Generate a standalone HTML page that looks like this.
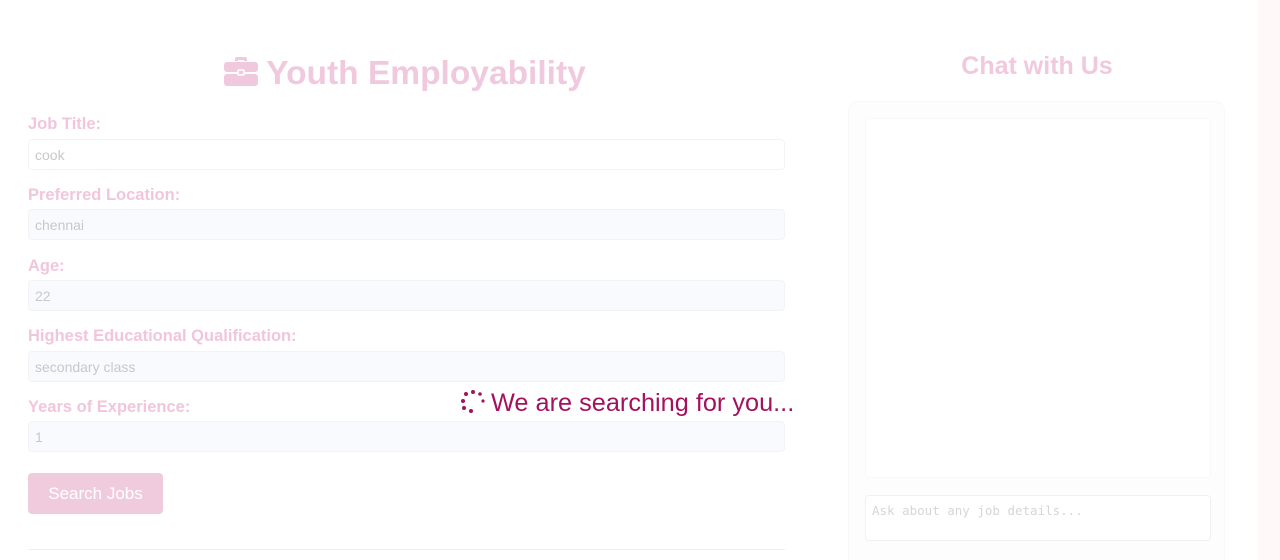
<!DOCTYPE html>
<html><head><style>
*{box-sizing:border-box;margin:0;padding:0}
html{overflow:hidden;height:560px}
body{width:1280px;height:560px;overflow:hidden;background:#fff;font-family:"Liberation Sans",sans-serif;position:relative}
.abs{position:absolute}
h1{position:absolute;left:0;width:810px;top:55px;text-align:center;font-size:33.5px;font-weight:bold;color:#f0c9de}
.lbl{position:absolute;left:28px;font-size:16.5px;font-weight:bold;color:#f1c6dd}
.inp{position:absolute;left:28px;width:757px;height:31px;border:1px solid #f3f3f5;border-radius:4px;background:#f9fafd;font-size:14px;color:#c8c8cc;padding:7px 6px}
.btn{position:absolute;left:28px;top:473px;width:135px;height:41px;background:#f0cbde;border-radius:4px;color:#fff;font-size:17px;text-align:center;line-height:41px}
</style></head><body>
<div class="abs" style="left:1258px;top:0;width:22px;height:560px;background:#fff8f8"></div>
<h1><svg width="34" height="30" viewBox="0 0 34 30" style="vertical-align:-2px;margin-right:8px"><path d="M11 5V3a2 2 0 0 1 2-2h8a2 2 0 0 1 2 2v2h-3V4h-6v1z" fill="#f0c9de"/><rect x="0" y="6" width="34" height="10" rx="3" fill="#f0c9de"/><rect x="0" y="18" width="34" height="12" rx="3" fill="#f0c9de"/><rect x="14" y="14" width="6" height="5" rx="1" fill="#f0c9de" stroke="#fff" stroke-width="1.5"/></svg>Youth Employability</h1>
<div class="lbl" style="top:115px">Job Title:</div>
<div class="inp" style="top:139px;background:#fff">cook</div>
<div class="lbl" style="top:186px">Preferred Location:</div>
<div class="inp" style="top:209px">chennai</div>
<div class="lbl" style="top:257px">Age:</div>
<div class="inp" style="top:280px">22</div>
<div class="lbl" style="top:327px">Highest Educational Qualification:</div>
<div class="inp" style="top:351px">secondary class</div>
<div class="lbl" style="top:398px">Years of Experience:</div>
<div class="inp" style="top:421px">1</div>
<div class="btn">Search Jobs</div>
<div class="abs" style="left:28px;top:549px;width:757px;height:1px;background:#eee"></div>

<div class="abs" style="left:459px;top:388px;height:30px;font-size:25.3px;color:#a3125c;white-space:nowrap">
<svg width="28" height="28" viewBox="0 0 28 28" style="vertical-align:-5px;margin-right:4px"><g fill="#a3125c"><circle cx="14" cy="4" r="2"/><circle cx="21" cy="6" r="1.8"/><circle cx="24" cy="13" r="1.6"/><circle cx="7" cy="6" r="2"/><circle cx="4" cy="13" r="2"/><circle cx="5" cy="20" r="2"/><circle cx="12" cy="23" r="2"/></g></svg>We are searching for you...</div>

<div class="abs" style="left:848px;width:378px;top:52px;text-align:center;font-size:25px;font-weight:bold;color:#f0c9de">Chat with Us</div>
<div class="abs" style="left:848px;top:101px;width:377px;height:480px;background:#fefdfe;border:1px solid #f9f8f9;border-radius:10px"></div>
<div class="abs" style="left:865px;top:118px;width:346px;height:360px;background:#fff;border:1px solid #f8f8f9;border-radius:4px"></div>
<div class="abs" style="left:865px;top:495px;width:346px;height:46px;background:#fff;border:1px solid #f0f0f0;border-radius:4px;font-family:'DejaVu Sans Mono',monospace;font-size:12.5px;color:#d6d6d6;padding:7px 6px">Ask about any job details...</div>
</body></html>
